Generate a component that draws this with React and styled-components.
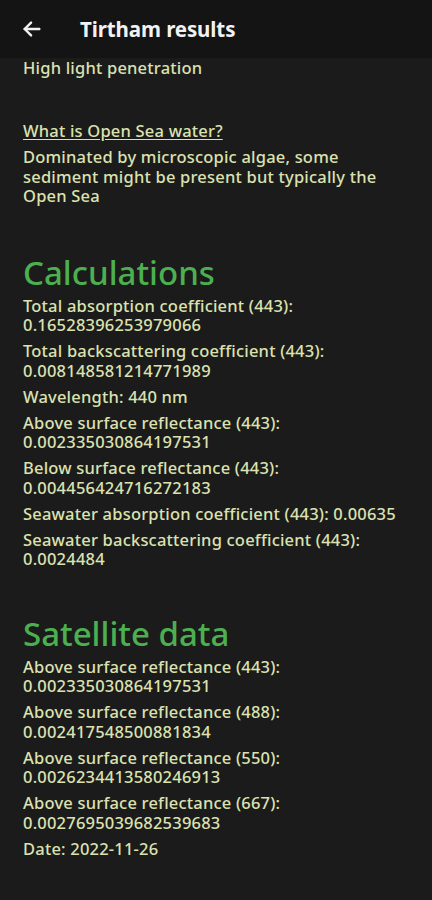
import React from "react";
import styled, { createGlobalStyle } from "styled-components";

const Global = createGlobalStyle`
  html, body { margin: 0; padding: 0; background: #1b1b1b; }
  body { font-family: "Noto Sans", "DejaVu Sans", sans-serif; }
`;

const Page = styled.div`
  width: 432px;
  min-height: 900px;
  background: #1b1b1b;
  overflow: hidden;
`;

const Header = styled.header`
  height: 58px;
  background: #141414;
  display: flex;
  align-items: center;
  padding-left: 20px;
  gap: 36px;
  box-sizing: border-box;
`;

const BackButton = styled.button`
  background: none;
  border: none;
  padding: 0;
  width: 24px;
  height: 24px;
  display: flex;
  align-items: center;
  justify-content: center;
  cursor: pointer;
`;

const Title = styled.h1`
  margin: 0;
  color: #f2f2f2;
  font-size: 20.5px;
  font-weight: 700;
  letter-spacing: -0.1px;
`;

const Content = styled.main`
  padding: 0 23px;
  color: #dbe2b0;
  font-size: 16.5px;
  font-weight: 500;
  line-height: 19.5px;
  letter-spacing: 0.2px;
`;

const Line = styled.p`
  margin: 0;
  padding-top: ${(p) => p.$top || 0}px;
`;

const Link = styled.a`
  display: block;
  color: #dbe2b0;
  text-decoration: underline;
  text-underline-offset: 2px;
  padding-top: 43px;
  margin-bottom: 7px;
`;

const SectionTitle = styled.h2`
  margin: 0;
  color: #4caf50;
  font-size: 33px;
  font-weight: 500;
  letter-spacing: 0;
  line-height: 44px;
  padding-top: ${(p) => p.$top}px;
  margin-bottom: 1px;
`;

const List = styled.div`
  display: flex;
  flex-direction: column;
  gap: 6.5px;
`;

const Item = styled.div``;

const calc = [
  ["Total absorption coefficient (443):", "0.16528396253979066"],
  ["Total backscattering coefficient (443):", "0.008148581214771989"],
  ["Wavelength: 440 nm"],
  ["Above surface reflectance (443):", "0.002335030864197531"],
  ["Below surface reflectance (443):", "0.004456424716272183"],
  ["Seawater absorption coefficient (443): 0.00635"],
  ["Seawater backscattering coefficient (443):", "0.0024484"],
];

const sat = [
  ["Above surface reflectance (443):", "0.002335030864197531"],
  ["Above surface reflectance (488):", "0.002417548500881834"],
  ["Above surface reflectance (550):", "0.0026234413580246913"],
  ["Above surface reflectance (667):", "0.0027695039682539683"],
  ["Date: 2022-11-26"],
];

const renderItems = (items) =>
  items.map((lines, i) => (
    <Item key={i}>
      {lines.map((l, j) => (
        <Line key={j}>{l}</Line>
      ))}
    </Item>
  ));

export default function App() {
  return (
    <Page>
      <Global />
      <Header>
        <BackButton aria-label="Back">
          <svg width="22" height="22" viewBox="0 0 24 24" fill="none" stroke="#f2f2f2" strokeWidth="2.6" strokeLinecap="round" strokeLinejoin="round">
            <path d="M20 12H4" />
            <path d="M11 5l-7 7 7 7" />
          </svg>
        </BackButton>
        <Title>Tirtham results</Title>
      </Header>
      <Content>
        <Line $top={-1}>High light penetration</Line>
        <Link href="#">What is Open Sea water?</Link>
        <Line>
          Dominated by microscopic algae, some sediment might be present but typically the Open Sea
        </Line>
        <SectionTitle $top={45}>Calculations</SectionTitle>
        <List>{renderItems(calc)}</List>
        <SectionTitle $top={43}>Satellite data</SectionTitle>
        <List>{renderItems(sat)}</List>
      </Content>
    </Page>
  );
}
